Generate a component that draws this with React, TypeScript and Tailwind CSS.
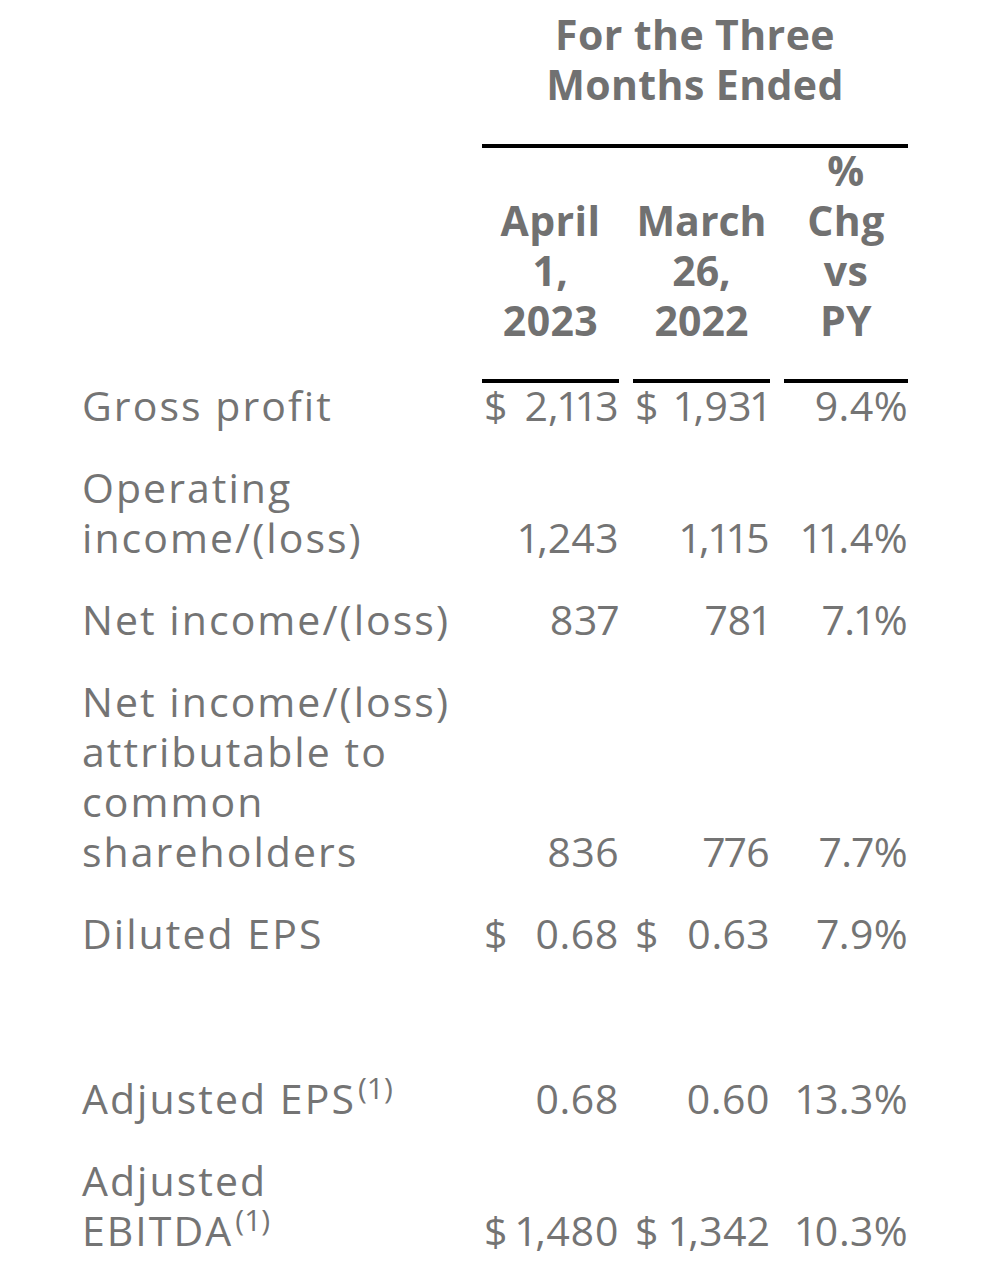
import React from "react";

type Row = {
  label: React.ReactNode;
  v1?: string;
  v2?: string;
  v3?: string;
  d1?: boolean;
  d2?: boolean;
  empty?: boolean;
};

const Sup = () => (
  <sup className="text-[30px] top-[-0.5em] tracking-normal pl-[2px]">(1)</sup>
);

const rows: Row[] = [
  { label: "Gross profit", v1: "2,113", v2: "1,931", v3: "9.4%", d1: true, d2: true },
  { label: <>Operating<br />income/(loss)</>, v1: "1,243", v2: "1,115", v3: "11.4%" },
  { label: "Net income/(loss)", v1: "837", v2: "781", v3: "7.1%" },
  {
    label: <>Net income/(loss)<br />attributable to<br />common<br />shareholders</>,
    v1: "836",
    v2: "776",
    v3: "7.7%",
  },
  { label: "Diluted EPS", v1: "0.68", v2: "0.63", v3: "7.9%", d1: true, d2: true },
  { label: "", empty: true },
  {
    label: <>Adjusted EPS<Sup /></>,
    v1: "0.68",
    v2: "0.60",
    v3: "13.3%",
  },
  {
    label: <>Adjusted<br />EBITDA<Sup /></>,
    v1: "1,480",
    v2: "1,342",
    v3: "10.3%",
    d1: true,
    d2: true,
  },
];

function Val({ v, dollar }: { v?: string; dollar?: boolean }) {
  return (
    <div className="-mt-[3px] flex items-end justify-between pb-[35px] tracking-[0.01em] proportional-nums">
      <span className="pl-[2px]">{dollar ? "$" : ""}</span>
      <span>{v}</span>
    </div>
  );
}

export default function App() {
  return (
    <div className="w-[992px] h-[1280px] bg-white pl-[82px] pt-[9px] text-[#747474] font-['Open_Sans',sans-serif] text-[41px] leading-[50px] overflow-hidden">
      <div className="grid grid-cols-[386px_137px_137px_124px] gap-x-[14px]">
        <div />
        <div className="col-span-3 text-center font-bold text-[#717171] pb-[35px] border-b-4 border-black tracking-[0.01em]">
          For the Three
          <br />
          Months Ended
        </div>

        <div />
        <div className="h-[235px] flex flex-col justify-end text-center font-bold text-[#717171] pb-[34px] border-b-4 border-black tracking-[0.01em]">
          <span>April</span>
          <span>1,</span>
          <span>2023</span>
        </div>
        <div className="h-[235px] flex flex-col justify-end text-center font-bold text-[#717171] pb-[34px] border-b-4 border-black">
          <span>March</span>
          <span>26,</span>
          <span>2022</span>
        </div>
        <div className="h-[235px] flex flex-col justify-end text-center font-bold text-[#717171] pb-[34px] border-b-4 border-black tracking-[0.01em]">
          <span>%</span>
          <span>Chg</span>
          <span>vs</span>
          <span>PY</span>
        </div>

        {rows.map((r, i) =>
          r.empty ? (
            <div key={i} className="col-span-4 h-[83px]" />
          ) : (
            <React.Fragment key={i}>
              <div className="-mt-[3px] pb-[35px] tracking-[0.05em]">{r.label}</div>
              <Val v={r.v1} dollar={r.d1} />
              <Val v={r.v2} dollar={r.d2} />
              <Val v={r.v3} />
            </React.Fragment>
          )
        )}
      </div>
    </div>
  );
}
